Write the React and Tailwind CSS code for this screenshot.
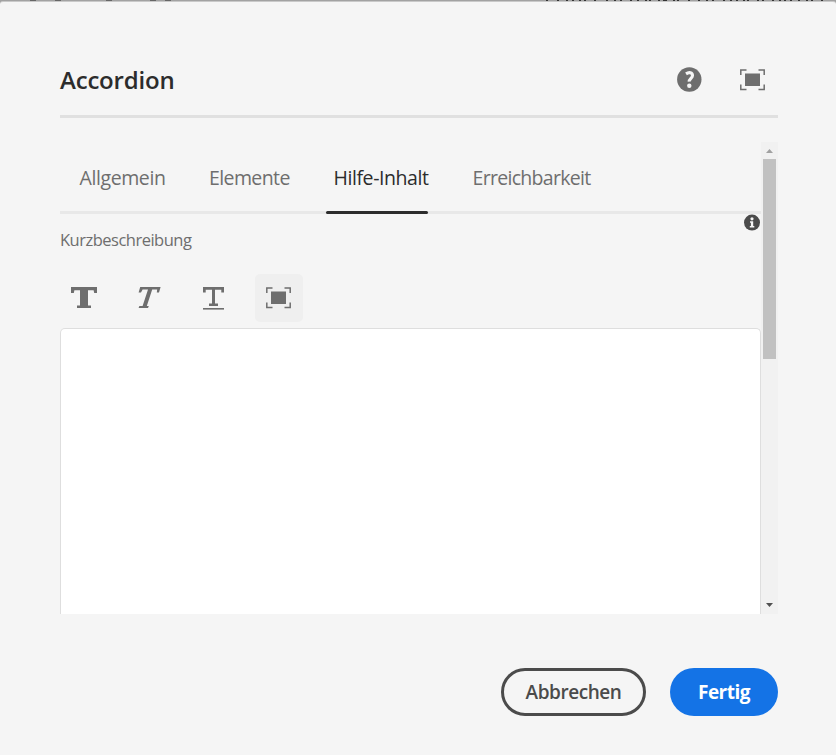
import React from "react";

const BACKDROP_MARKS = [30, 55, 106, 150, 165, 546, 557, 566, 572, 579, 584, 594, 606, 614, 620, 630, 637, 645, 649, 658, 663, 665, 673, 677, 688, 698, 706, 712, 723, 730, 736, 743, 747, 757, 762, 772, 779, 784, 790, 798, 806, 811, 821];

function FullScreenIcon() {
  return (
    <svg width="26" height="22" viewBox="0 0 26 22" className="block text-[#6e6e6e]" fill="none">
      <path d="M0.8 6V1H6.5M18.5 1H24.2V6M24.2 15.5V20.5H18.5M6.5 20.5H0.8V15.5" stroke="currentColor" strokeWidth="1.5" />
      <rect x="5" y="4.5" width="15" height="12.5" fill="currentColor" />
    </svg>
  );
}

function HelpIcon() {
  return (
    <svg width="26" height="26" viewBox="0 0 26 26" className="block">
      <circle cx="13.3" cy="12.5" r="12.2" fill="#6e6e6e" />
      <path d="M10 6.9C13.2 4.7 16.5 5.6 16.5 8.5C16.5 11.2 13 11.5 13.2 14.7" fill="none" stroke="#f5f5f5" strokeWidth="3.1" />
      <circle cx="13.3" cy="18.7" r="2.2" fill="#f5f5f5" />
    </svg>
  );
}

function InfoIcon() {
  return (
    <svg width="16" height="16" viewBox="0 0 16 16" className="block overflow-visible">
      <circle cx="8" cy="7.6" r="8" fill="#4b4b4b" />
      <circle cx="8" cy="3.8" r="1.6" fill="#f5f5f5" />
      <path d="M6 6.2H9.2V11H10.3V12.6H5.8V11H6.9V7.7H6Z" fill="#f5f5f5" />
    </svg>
  );
}

function BoldIcon() {
  return (
    <svg width="26" height="22" viewBox="0 0 26 22" className="block">
      <path d="M0 0H26V6H23.2L22.6 3.3H17V18.4H20V21H6V18.4H9V3.3H3.4L2.8 6H0Z" fill="#6e6e6e" />
    </svg>
  );
}

function ItalicIcon() {
  return (
    <svg width="24" height="22" viewBox="0 0 24 22" className="block">
      <path d="M3.2 0H23.6L22 5.6H19.8L20.2 2.6H15.2L9.8 18.9H11.8L11 21H1.6L2.4 18.9H5.6L11 2.6H5.6L4 5.6H1.6Z" fill="#6e6e6e" />
    </svg>
  );
}

function UnderlineIcon() {
  return (
    <svg width="22" height="24" viewBox="0 0 22 24" className="block">
      <path d="M0 1H21V6.5H18.3V3.8H12V17.5H15V20H6V17.5H9V3.8H2.7V6.5H0Z" fill="#6e6e6e" />
      <rect y="22" width="21" height="1.6" fill="#6e6e6e" />
    </svg>
  );
}

function Tab({ label, spacing, active }) {
  return (
    <div className={`relative flex h-[72px] items-center text-[19.5px] ${spacing} ${active ? "text-[#2c2c2c]" : "text-[#6e6e6e]"}`}>
      <span className="pb-px whitespace-nowrap">{label}</span>
      {active && <span className="absolute -left-2 bottom-0 h-[3px] w-[102px] rounded-full bg-[#2c2c2c]" />}
    </div>
  );
}

export default function App() {
  return (
    <div className="flex h-[755px] w-[836px] flex-col overflow-hidden bg-[#a2a2a2] font-['Open_Sans','Noto_Sans',sans-serif]">
      <div className="h-px shrink-0">
        <svg width="836" height="1" className="block">
          {BACKDROP_MARKS.map((x, i) => (
            <rect key={x} x={x} width={i < 5 ? 6 : 2} height="1" fill={i < 5 ? "#666666" : "#333333"} />
          ))}
        </svg>
      </div>
      <div className="flex min-h-0 flex-1 flex-col rounded-t-[3px] border-t border-[#c9c9c9] bg-[#f5f5f5] pr-[58px] pl-[60px]">
        <header className="flex h-[116px] shrink-0 items-center border-b-[3px] border-[#e0e0e0] pt-[42px]">
          <h1 className="flex-1 text-[24px] leading-8 font-semibold tracking-[-0.2px] text-[#2c2c2c]">Accordion</h1>
          <div className="flex items-center gap-[38px] pr-[12px]">
            <HelpIcon />
            <FullScreenIcon />
          </div>
        </header>

        <main className="mt-6 flex h-[472px] shrink-0 overflow-hidden">
          <div className="relative flex w-[701px] flex-col">
            <nav className="flex h-[72px] shrink-0 border-b-[3px] border-[#e8e8e8] pl-[19.5px]">
              <div className="w-[129.5px]"><Tab label="Allgemein" spacing="tracking-[-0.4px]" /></div>
              <div className="w-[124.5px]"><Tab label="Elemente" spacing="tracking-[-0.6px]" /></div>
              <div className="w-[139px]"><Tab label="Hilfe-Inhalt" spacing="tracking-[-0.42px]" active /></div>
              <Tab label="Erreichbarkeit" spacing="tracking-[-0.7px]" />
            </nav>
            <div className="absolute top-[73px] right-[1px]"><InfoIcon /></div>
            <div className="mt-[14px] h-6 text-[16.5px] leading-6 tracking-[-0.5px] text-[#6e6e6e]">Kurzbeschreibung</div>
            <div className="mt-[22px] flex h-12 items-center gap-[17px]">
              <div className="flex size-12 items-center justify-center"><BoldIcon /></div>
              <div className="flex size-12 items-center justify-center"><ItalicIcon /></div>
              <div className="flex size-12 items-center justify-center"><UnderlineIcon /></div>
              <div className="flex size-12 items-center justify-center rounded-[5px] bg-[#efefef]"><FullScreenIcon /></div>
            </div>
            <div className="mt-[6px] flex-1 rounded-t-[5px] border border-b-0 border-[#dedede] bg-white" />
          </div>
          <div className="flex w-[17px] flex-col items-center bg-[#f1f1f1]">
            <svg width="17" height="17" viewBox="0 0 17 17" className="block shrink-0">
              <path d="M5 11L8.5 7L12 11Z" fill="#a1a1a1" />
            </svg>
            <div className="h-[200px] w-[13px] bg-[#c1c1c1]" />
            <svg width="17" height="17" viewBox="0 0 17 17" className="mt-auto block shrink-0">
              <path d="M5 6H12L8.5 10Z" fill="#505050" />
            </svg>
          </div>
        </main>

        <footer className="mt-[54px] flex justify-end gap-6">
          <button className="h-12 w-[145px] rounded-full border-[3px] border-[#4b4b4b] text-[19px] font-semibold tracking-[-0.45px] text-[#4b4b4b]">Abbrechen</button>
          <button className="h-12 w-[108px] rounded-full bg-[#1473e6] text-[19px] font-bold tracking-[-0.5px] text-white">Fertig</button>
        </footer>
      </div>
    </div>
  );
}
